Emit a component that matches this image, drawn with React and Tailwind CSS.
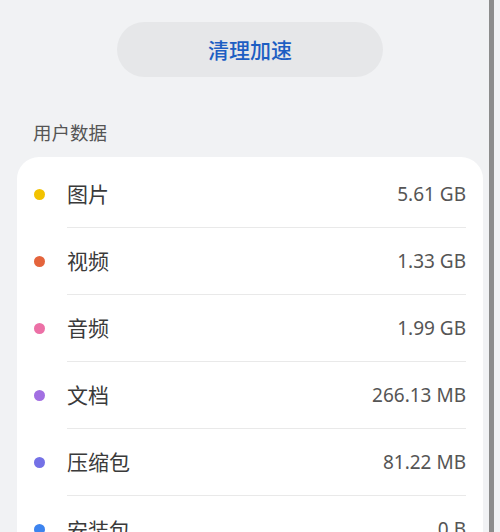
import React from 'react'

const items = [
  { name: '图片', size: '5.61 GB', color: 'bg-[#f2c200]' },
  { name: '视频', size: '1.33 GB', color: 'bg-[#e4643c]' },
  { name: '音频', size: '1.99 GB', color: 'bg-[#ec70a6]' },
  { name: '文档', size: '266.13 MB', color: 'bg-[#a26fe2]' },
  { name: '压缩包', size: '81.22 MB', color: 'bg-[#7471e6]' },
  { name: '安装包', size: '0 B', color: 'bg-[#3d84ef]' },
]

const App = () => {
  return (
    <div className="flex h-[532px] w-[500px] overflow-hidden bg-[#f1f2f4] font-['Noto_Sans_CJK_SC','Noto_Sans',sans-serif]">
      <div className="w-[489px] shrink-0">
        <div className="flex justify-center pt-[22px] pl-[11px]">
          <button className="flex h-[55px] w-[266px] items-center justify-center rounded-full bg-[#e6e7e9] text-[21px] font-medium text-[#1d5ec3]">
            清理加速
          </button>
        </div>
        <div className="px-[33px] pt-[43px] text-[18.5px] leading-[24px] text-[#555]">用户数据</div>
        <div className="ml-[17px] mr-[6px] mt-[13px] rounded-[22px] bg-white pt-[4px]">
          {items.map((item, i) => (
            <div key={item.name} className="flex h-[67px] items-center">
              <span className={`ml-[17px] h-[11px] w-[11px] rounded-full ${item.color}`} />
              <div
                className={`ml-[22px] mr-[17px] flex h-full flex-1 items-center justify-between ${
                  i < items.length - 1 ? 'border-b border-[#e9e9e9]' : ''
                }`}
              >
                <span className="text-[21px] text-[#3a3a3a]">{item.name}</span>
                <span className="font-['Noto_Sans',sans-serif] text-[19px] text-[#555]">{item.size}</span>
              </div>
            </div>
          ))}
        </div>
      </div>
      <div className="h-full w-[5px] shrink-0 bg-[#8c8c8c]" />
    </div>
  )
}

export default App
